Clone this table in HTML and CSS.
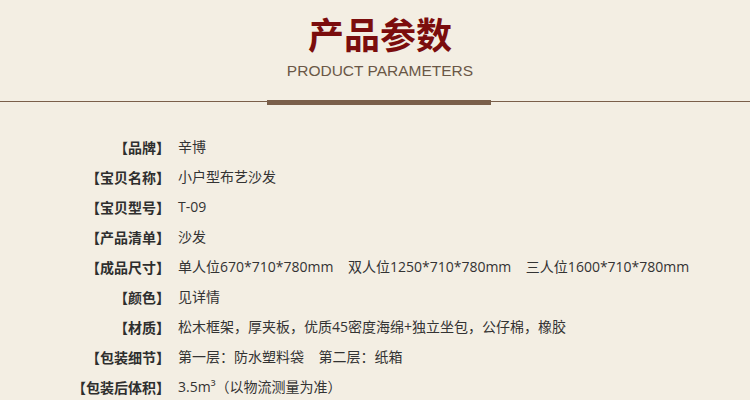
FILE: index.html
```html
<!DOCTYPE html>
<html lang="zh-CN">
<head>
    <meta charset="UTF-8">
    <title>产品参数</title>
    <link rel="stylesheet" href="styles.css">
</head>
<body>

<div class="page">
    <div class="heading">
        <h1>产品参数</h1>
        <p class="sub">PRODUCT PARAMETERS</p>
    </div>

    <div class="rule">
        <span class="bar"></span>
    </div>

    <div class="params">
        <div class="row"><span class="label">【品牌】</span><span class="value">辛博</span></div>
        <div class="row"><span class="label">【宝贝名称】</span><span class="value">小户型布艺沙发</span></div>
        <div class="row"><span class="label">【宝贝型号】</span><span class="value">T-09</span></div>
        <div class="row"><span class="label">【产品清单】</span><span class="value">沙发</span></div>
        <div class="row"><span class="label">【成品尺寸】</span><span class="value">单人位670*710*780mm&nbsp;&nbsp;&nbsp;&nbsp;双人位1250*710*780mm&nbsp;&nbsp;&nbsp;&nbsp;三人位1600*710*780mm</span></div>
        <div class="row"><span class="label">【颜色】</span><span class="value">见详情</span></div>
        <div class="row"><span class="label">【材质】</span><span class="value">松木框架，厚夹板，优质45密度海绵+独立坐包，公仔棉，橡胶</span></div>
        <div class="row"><span class="label">【包装细节】</span><span class="value">第一层：防水塑料袋&nbsp;&nbsp;&nbsp;&nbsp;第二层：纸箱</span></div>
        <div class="row"><span class="label">【包装后体积】</span><span class="value">3.5m³（以物流测量为准）</span></div>
    </div>
</div>

</body>
</html>
```

FILE: styles.css
```css
html, body {
    margin: 0;
    padding: 0;
    overflow: hidden;
}

body {
    background-color: #f3eee3;
    font-family: "Open Sans", "Noto Sans CJK SC", sans-serif;
    color: #333;
}

.page {
    width: 750px;
}

.heading {
    text-align: center;
    padding-left: 10px;
    padding-top: 10px;
}

h1 {
    margin: 0;
    font-family: "Noto Sans CJK SC", sans-serif;
    font-size: 36px;
    line-height: 46px;
    font-weight: bold;
    color: #7b0d0d;
}

.sub {
    margin: 6px 0 0 0;
    font-family: "Liberation Sans", Arial, sans-serif;
    font-size: 15.5px;
    line-height: 18px;
    color: #6a5746;
}

/* linea con barra centrale */
.rule {
    position: relative;
    margin-top: 19px;
    height: 6px;
    display: flex;
    align-items: center;
    justify-content: center;
    padding-left: 8px;
}

.rule::before {
    content: "";
    position: absolute;
    left: 0;
    right: 0;
    top: 2px;
    height: 1px;
    background-color: #7a5f4a;
}

.bar {
    position: relative;
    width: 224px;
    height: 5px;
    background-color: #7a5f4a;
}

.params {
    margin-top: 27px;
}

.row {
    display: flex;
    height: 30px;
    line-height: 30px;
    font-size: 14px;
}

.label {
    width: 170px;
    text-align: right;
    font-family: "Noto Sans CJK SC", sans-serif;
    font-weight: bold;
    color: #2e2e2e;
}

.value {
    padding-left: 8px;
    white-space: nowrap;
    color: #333;
}
```
